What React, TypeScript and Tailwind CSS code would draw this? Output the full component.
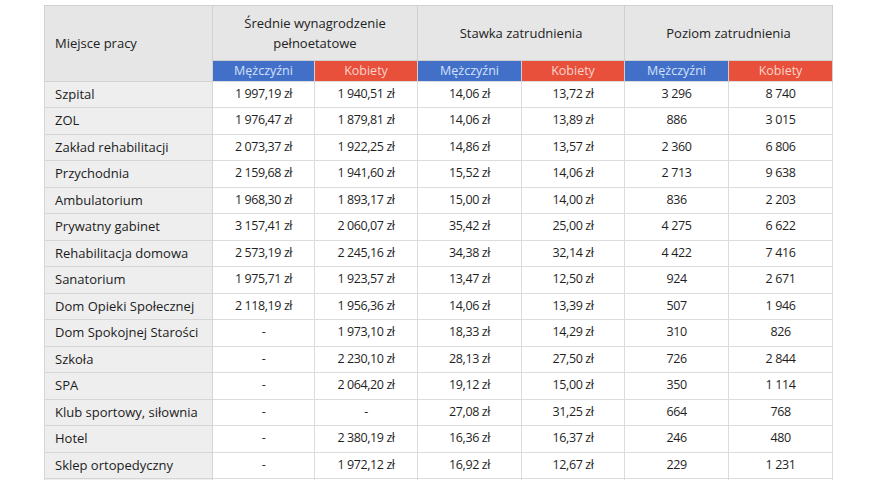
import React from "react";

type Row = [string, string, string, string, string, string, string];

const rows: Row[] = [
  ["Szpital", "1 997,19 zł", "1 940,51 zł", "14,06 zł", "13,72 zł", "3 296", "8 740"],
  ["ZOL", "1 976,47 zł", "1 879,81 zł", "14,06 zł", "13,89 zł", "886", "3 015"],
  ["Zakład rehabilitacji", "2 073,37 zł", "1 922,25 zł", "14,86 zł", "13,57 zł", "2 360", "6 806"],
  ["Przychodnia", "2 159,68 zł", "1 941,60 zł", "15,52 zł", "14,06 zł", "2 713", "9 638"],
  ["Ambulatorium", "1 968,30 zł", "1 893,17 zł", "15,00 zł", "14,00 zł", "836", "2 203"],
  ["Prywatny gabinet", "3 157,41 zł", "2 060,07 zł", "35,42 zł", "25,00 zł", "4 275", "6 622"],
  ["Rehabilitacja domowa", "2 573,19 zł", "2 245,16 zł", "34,38 zł", "32,14 zł", "4 422", "7 416"],
  ["Sanatorium", "1 975,71 zł", "1 923,57 zł", "13,47 zł", "12,50 zł", "924", "2 671"],
  ["Dom Opieki Społecznej", "2 118,19 zł", "1 956,36 zł", "14,06 zł", "13,39 zł", "507", "1 946"],
  ["Dom Spokojnej Starości", "-", "1 973,10 zł", "18,33 zł", "14,29 zł", "310", "826"],
  ["Szkoła", "-", "2 230,10 zł", "28,13 zł", "27,50 zł", "726", "2 844"],
  ["SPA", "-", "2 064,20 zł", "19,12 zł", "15,00 zł", "350", "1 114"],
  ["Klub sportowy, siłownia", "-", "-", "27,08 zł", "31,25 zł", "664", "768"],
  ["Hotel", "-", "2 380,19 zł", "16,36 zł", "16,37 zł", "246", "480"],
  ["Sklep ortopedyczny", "-", "1 972,12 zł", "16,92 zł", "12,67 zł", "229", "1 231"],
];

const groups = ["Średnie wynagrodzenie pełnoetatowe", "Stawka zatrudnienia", "Poziom zatrudnienia"];

export default function App() {
  return (
    <div
      className="w-[880px] h-[480px] overflow-hidden bg-white pt-[5px] pl-[44px] text-[#222]"
      style={{ fontFamily: '"Open Sans", "Noto Sans", sans-serif' }}
    >
      <table className="border-collapse table-fixed w-[788px] text-[13px]">
        <colgroup>
          <col className="w-[168px]" />
          <col className="w-[102px]" />
          <col className="w-[103px]" />
          <col className="w-[104px]" />
          <col className="w-[103px]" />
          <col className="w-[104px]" />
          <col className="w-[104px]" />
        </colgroup>
        <thead>
          <tr className="h-[54.5px]">
            <th
              rowSpan={2}
              className="bg-[#e6e6e6] border border-[#d2d2d2] text-left font-normal px-[10px] text-[13px] text-[#222]"
            >
              Miejsce pracy
            </th>
            {groups.map((g, i) => (
              <th
                key={g}
                colSpan={2}
                className={
                  "bg-[#e6e6e6] border border-[#cfcfcf] font-normal text-[13px] leading-[20px] text-[#222] " +
                  (i === 0 ? "px-[22px]" : "px-2")
                }
              >
                {g}
              </th>
            ))}
          </tr>
          <tr className="h-[20px]">
            {groups.map((g) => (
              <React.Fragment key={g}>
                <th className="bg-[#4270c9] border-x border-[#cfcfcf] font-normal text-[12.5px] leading-[20px] text-[#d3e0fa] p-0">
                  Mężczyźni
                </th>
                <th className="bg-[#e8503b] border-x border-[#cfcfcf] font-normal text-[12.5px] leading-[20px] text-[#fbd3cb] p-0">
                  Kobiety
                </th>
              </React.Fragment>
            ))}
          </tr>
        </thead>
        <tbody>
          {rows.map((r) => (
            <tr key={r[0]} className="h-[26.5px]">
              <td className="bg-[#eeeeee] border border-[#d6d6d6] px-[10px] text-[13px] text-[#1c1c1c] whitespace-nowrap">
                {r[0]}
              </td>
              {r.slice(1).map((v, j) => (
                <td
                  key={j}
                  className="border border-[#dcdcdc] text-center text-[12.5px] tracking-[-0.4px] text-[#1f1f1f] p-0 whitespace-nowrap"
                >
                  {v}
                </td>
              ))}
            </tr>
          ))}
          <tr className="h-[26.5px]">
            <td className="bg-[#eeeeee] border border-[#d6d6d6]" />
            {[0, 1, 2, 3, 4, 5].map((j) => (
              <td key={j} className="border border-[#dcdcdc]" />
            ))}
          </tr>
        </tbody>
      </table>
    </div>
  );
}
